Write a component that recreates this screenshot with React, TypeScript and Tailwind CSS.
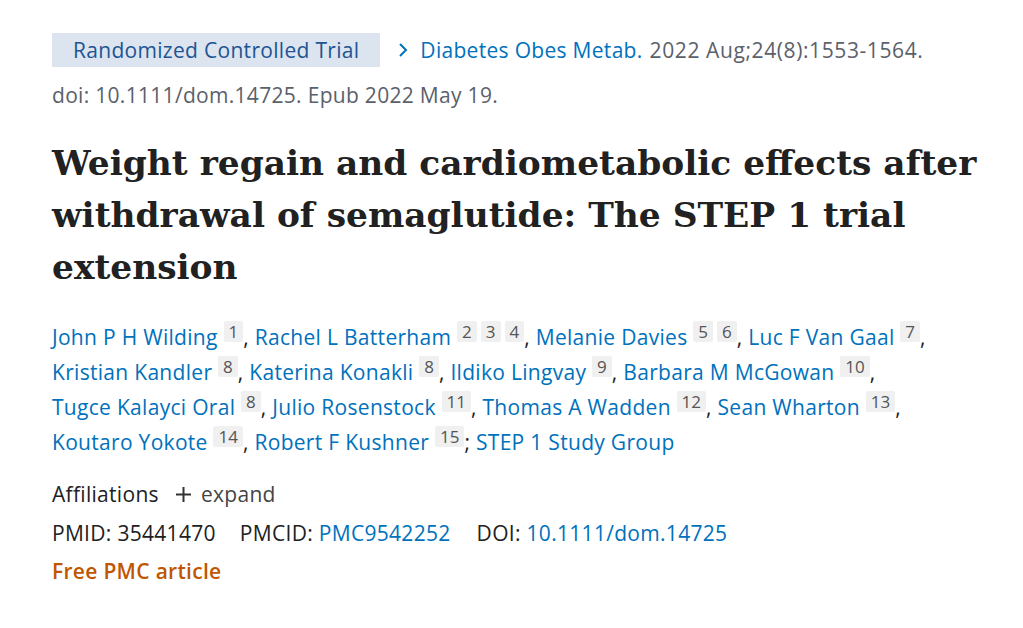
import React from 'react';

const authors: [string, string[]][] = [
  ['John P H Wilding', ['1']],
  ['Rachel L Batterham', ['2', '3', '4']],
  ['Melanie Davies', ['5', '6']],
  ['Luc F Van Gaal', ['7']],
  ['Kristian Kandler', ['8']],
  ['Katerina Konakli', ['8']],
  ['Ildiko Lingvay', ['9']],
  ['Barbara M McGowan', ['10']],
  ['Tugce Kalayci Oral', ['8']],
  ['Julio Rosenstock', ['11']],
  ['Thomas A Wadden', ['12']],
  ['Sean Wharton', ['13']],
  ['Koutaro Yokote', ['14']],
  ['Robert F Kushner', ['15']],
];

export default function App() {
  return (
    <div className="min-h-screen bg-white px-[52px] pt-[33px] text-[21px] tracking-[0.3px] text-[#212121]" style={{ fontFamily: '"Open Sans", sans-serif' }}>
      {/* citation line */}
      <div className="flex flex-wrap items-center leading-[34px]">
        <span className="bg-[#dce4ef] px-[21px] text-[#205493]">Randomized Controlled Trial</span>
        <span className="ml-[17px] flex items-center text-[#0071bc]">
          <svg width="12" height="16" viewBox="0 0 12 16" className="mr-[11px]">
            <path d="M3 2 L9 8 L3 14" fill="none" stroke="#0071bc" strokeWidth="2" />
          </svg>
          Diabetes Obes Metab.
        </span>
        <span className="ml-[7px] tracking-[0.6px] text-[#5b616b]">2022 Aug;24(8):1553-1564.</span>
      </div>
      <div className="mt-[11px] leading-[34px] text-[#5b616b]">doi: 10.1111/dom.14725. Epub 2022 May 19.</div>

      {/* title */}
      <h1 className="mt-[25px] whitespace-nowrap text-[34.4px] font-bold leading-[52px] tracking-normal text-[#212121]" style={{ fontFamily: '"DejaVu Serif", serif' }}>
        Weight regain and cardiometabolic effects after
        <br />
        withdrawal of semaglutide: The STEP 1 trial
        <br />
        extension
      </h1>

      {/* authors */}
      <div className="mt-[27px] max-w-[880px] leading-[35px] text-[#0071bc]">
        {authors.map(([name, sups], i) => (
          <span key={name}>
            {name}{' '}
            {sups.map((s, j) => (
              <span
                key={s}
                className={`relative -top-[7px] inline-block rounded-[2px] bg-[#f0f0f0] px-[5px] text-[17px] leading-[21px] tracking-normal text-[#555] ${j > 0 ? 'ml-[4px]' : ''}`}
              >
                {s}
              </span>
            ))}
            <span className="text-[#212121]">{i < authors.length - 1 ? ', ' : '; '}</span>
            {(i === 3 || i === 7 || i === 11) && <br />}
          </span>
        ))}
        STEP 1 Study Group
      </div>

      {/* affiliations */}
      <div className="mt-[17px] flex items-center leading-[34px] text-[#212121]">
        Affiliations
        <span className="ml-[17px] flex items-center text-[#444]">
          <svg width="15" height="15" viewBox="0 0 15 15" className="mr-[10px]">
            <path d="M7.5 0 V15 M0 7.5 H15" stroke="#333" strokeWidth="2" />
          </svg>
          expand
        </span>
      </div>
      <div className="mt-[3px] leading-[38px]">
        <span>PMID: 35441470</span>
        <span className="ml-[24px]">PMCID: <span className="text-[#0071bc]">PMC9542252</span></span>
        <span className="ml-[26px]">DOI: <span className="text-[#0071bc]">10.1111/dom.14725</span></span>
      </div>
      <div className="font-semibold leading-[38px] text-[#c05600]">Free PMC article</div>
    </div>
  );
}
